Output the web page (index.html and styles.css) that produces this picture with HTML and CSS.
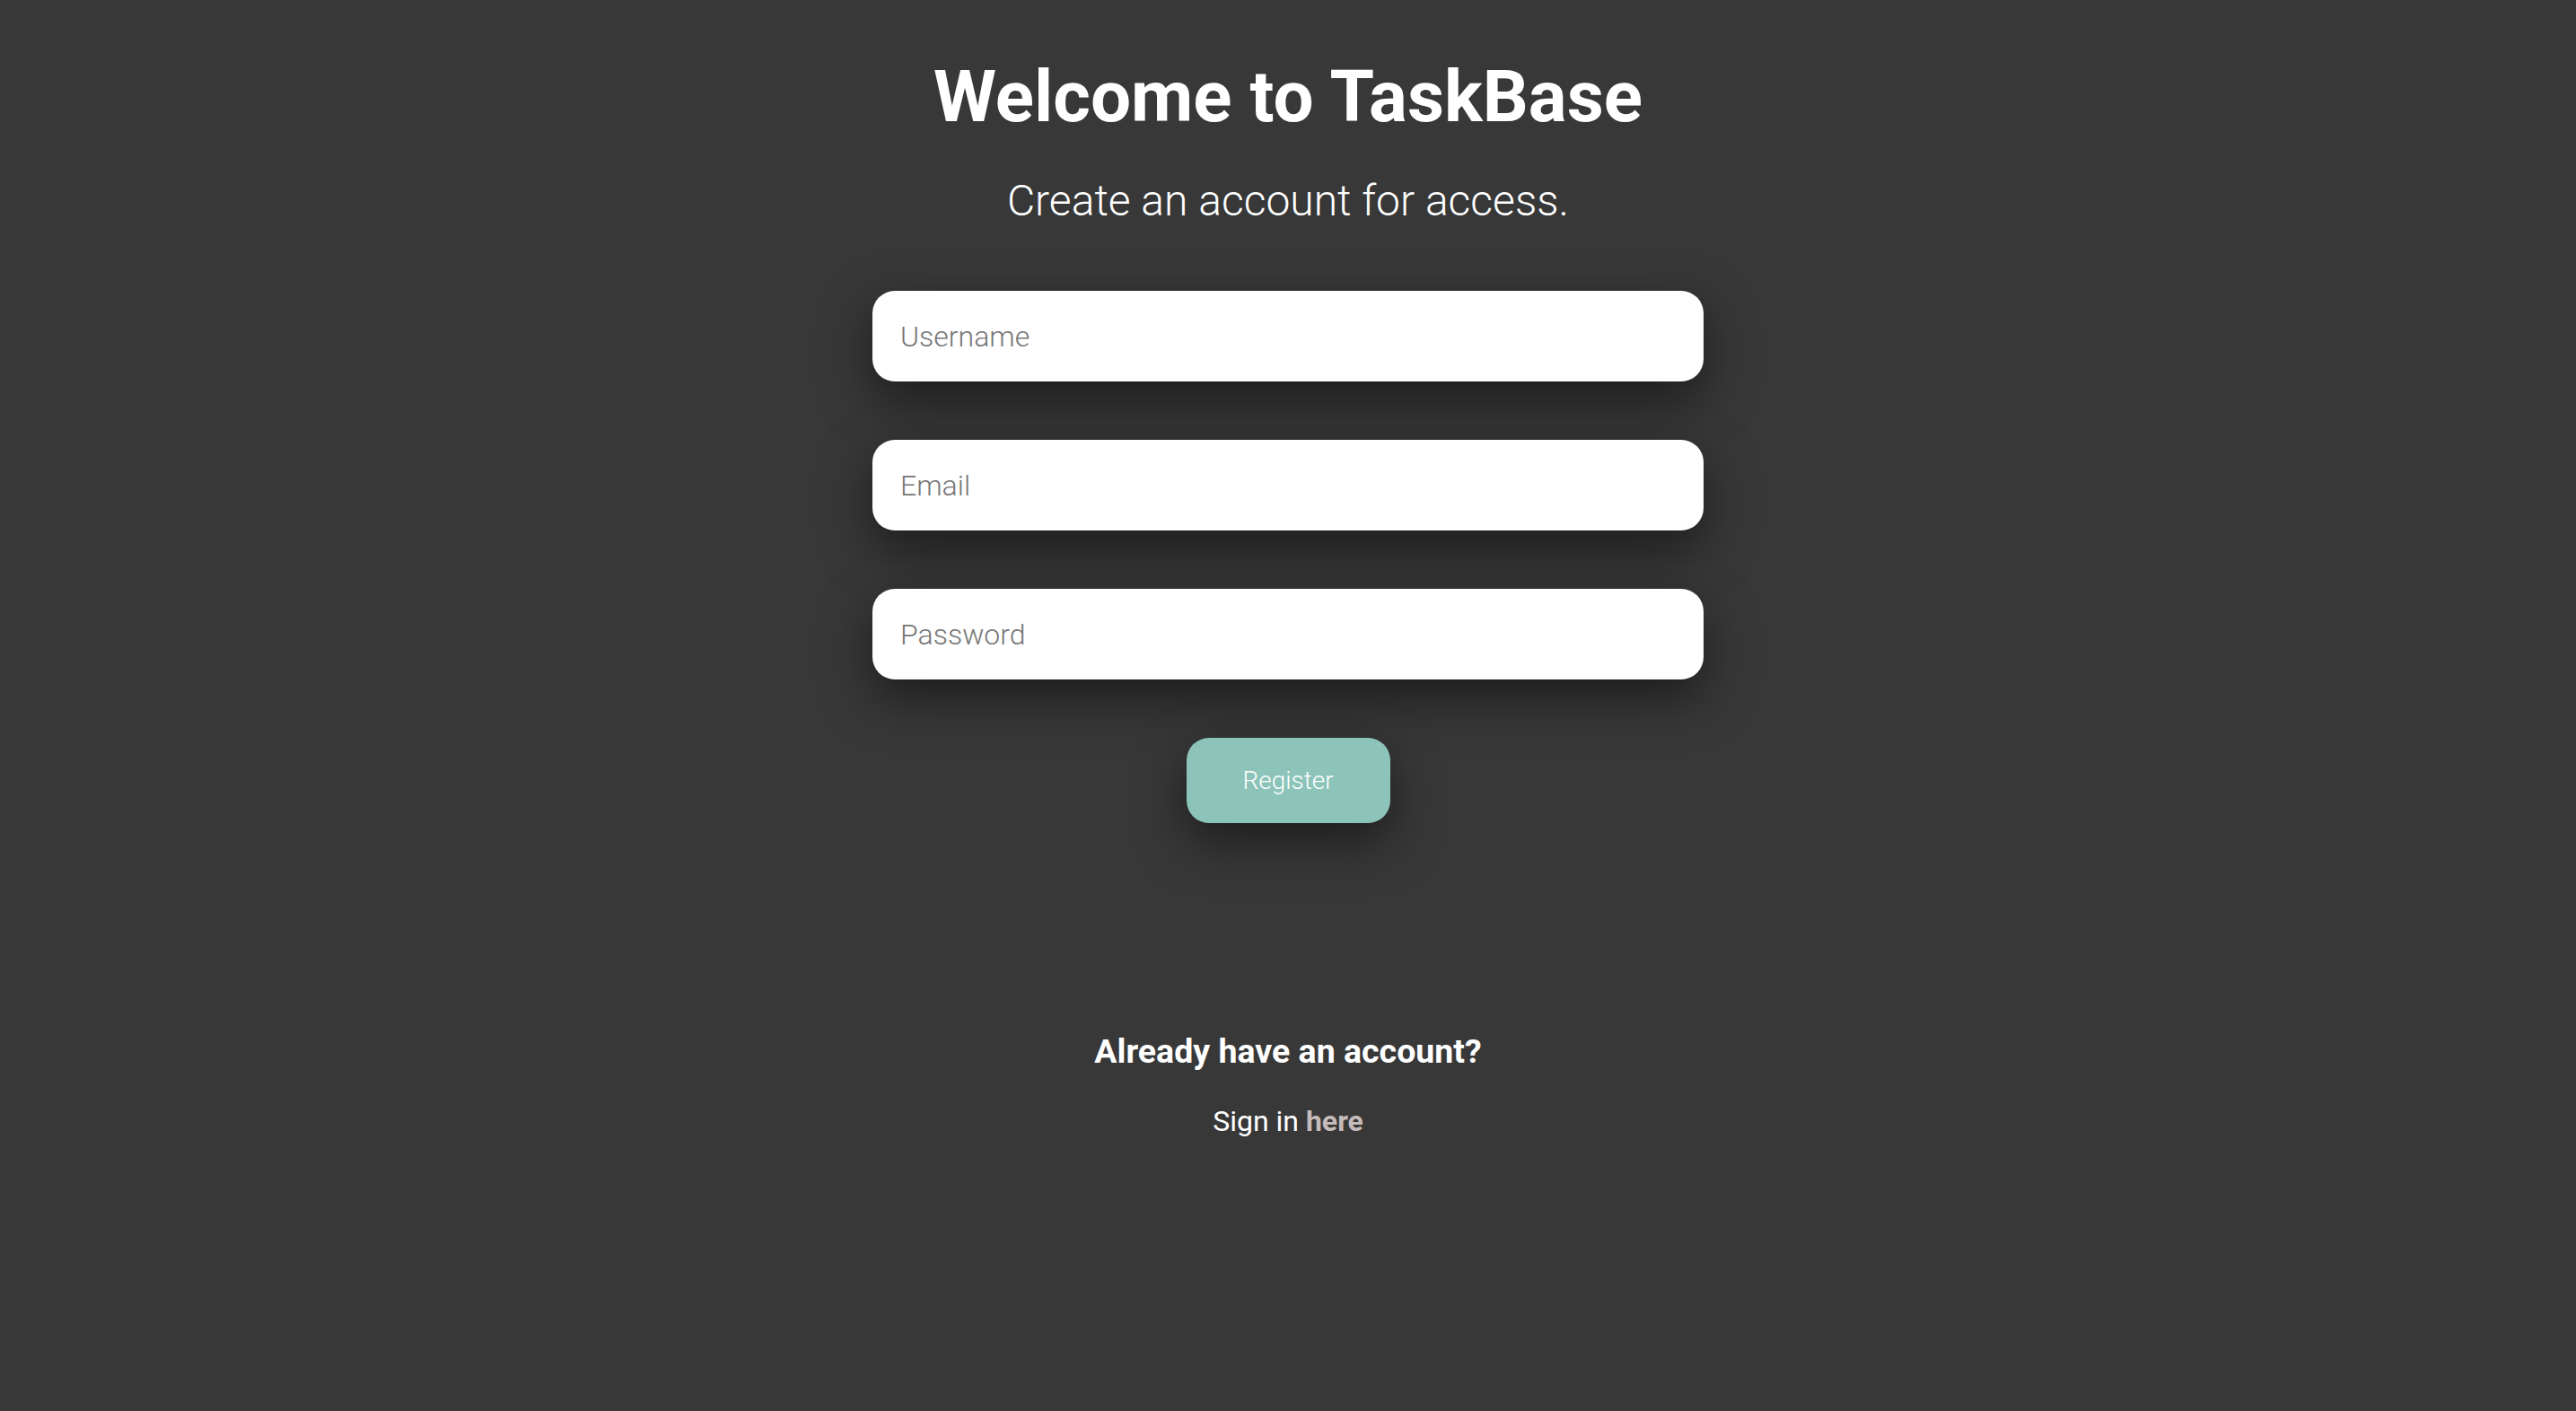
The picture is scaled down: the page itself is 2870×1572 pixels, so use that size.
FILE: index.html
```html
<!DOCTYPE html>
<html lang="en">
<head>
<meta charset="utf-8">
<title>TaskBase - Register</title>
<link rel="stylesheet" href="styles.css">
</head>
<body>
<main class="page">
  <h1 class="title">Welcome to TaskBase</h1>
  <p class="subtitle">Create an account for access.</p>
  <form class="form">
    <input class="field" type="text" placeholder="Username">
    <input class="field" type="email" placeholder="Email">
    <input class="field" type="password" placeholder="Password">
    <button class="btn" type="button">Register</button>
  </form>
  <h3 class="already">Already have an account?</h3>
  <p class="signin">Sign in <a class="link" href="#">here</a></p>
</main>
</body>
</html>
```

FILE: styles.css
```css
html, body {
  margin: 0;
  padding: 0;
  background: #383838;
  min-height: 100%;
}
body {
  font-family: Roboto, "Liberation Sans", sans-serif;
  color: #ffffff;
  min-height: 1572px;
}
.page {
  display: flex;
  flex-direction: column;
  align-items: center;
  padding-top: 61px;
}
.title {
  margin: 0;
  font-size: 80px;
  font-weight: 700;
  line-height: 94px;
}
.subtitle {
  margin: 41px 0 0;
  font-size: 48px;
  font-weight: 300;
  line-height: 56px;
}
.form {
  margin-top: 72px;
  display: flex;
  flex-direction: column;
  align-items: center;
  gap: 65px;
}
.field {
  box-sizing: border-box;
  width: 926px;
  height: 101px;
  border: none;
  border-radius: 25px;
  background: #ffffff;
  padding: 0 31px;
  font-family: Roboto, "Liberation Sans", sans-serif;
  font-size: 32px;
  font-weight: 300;
  color: #333;
  outline: none;
  box-shadow: 0 20px 55px rgba(0, 0, 0, 0.5);
}
.field::placeholder {
  color: #767676;
  opacity: 1;
}
.btn {
  box-sizing: border-box;
  width: 227px;
  height: 95px;
  border: none;
  border-radius: 25px;
  background: #8cc4b9;
  color: #ffffff;
  font-family: Roboto, "Liberation Sans", sans-serif;
  font-size: 28px;
  font-weight: 300;
  box-shadow: 0 20px 55px rgba(0, 0, 0, 0.5);
  cursor: pointer;
}
.already {
  margin: 231px 0 0;
  font-size: 37.5px;
  font-weight: 700;
  line-height: 47px;
}
.signin {
  margin: 35px 0 0;
  font-size: 32px;
  font-weight: 400;
  line-height: 38px;
}
.link {
  color: #c6bbbb;
  font-weight: 700;
  text-decoration: none;
}
```
